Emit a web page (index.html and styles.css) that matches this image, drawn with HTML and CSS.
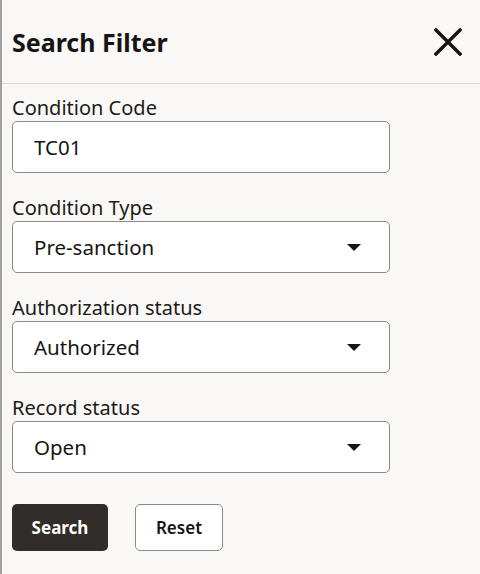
FILE: index.html
```html
<!DOCTYPE html>
<html lang="en">
<head>
    <meta charset="UTF-8">
    <meta name="viewport" content="width=device-width, initial-scale=1.0">
    <title>Search Filter</title>
    <link rel="stylesheet" href="styles.css">
</head>
<body>
    <div class="panel">
        <div class="panel-header">
            <h1>Search Filter</h1>
            <button class="close-btn" aria-label="Close">
                <svg width="28" height="28" viewBox="0 0 28 28">
                    <path d="M2 2 L26 26 M26 2 L2 26" stroke="#161513" stroke-width="3.4" stroke-linecap="square" fill="none"/>
                </svg>
            </button>
        </div>
        <form class="filter-form" onsubmit="return false">
            <div class="field">
                <label for="code">Condition Code</label>
                <input type="text" id="code" class="text-input" value="TC01">
            </div>
            <div class="field">
                <label>Condition Type</label>
                <div class="select-box"><span>Pre-sanction</span><i class="caret"></i></div>
            </div>
            <div class="field">
                <label>Authorization status</label>
                <div class="select-box"><span>Authorized</span><i class="caret"></i></div>
            </div>
            <div class="field">
                <label>Record status</label>
                <div class="select-box"><span>Open</span><i class="caret"></i></div>
            </div>
            <div class="actions">
                <button class="btn btn-primary">Search</button>
                <button class="btn btn-outline" type="reset">Reset</button>
            </div>
        </form>
    </div>
</body>
</html>
```

FILE: styles.css
```css
body {
    margin: 0;
    background: #f9f8f6;
    font-family: "Noto Sans", Arial, sans-serif;
    color: #161513;
}

.panel {
    height: 100vh;
    box-sizing: border-box;
    border-left: 2px solid #a3a19e;
}

.panel-header {
    height: 83px;
    display: flex;
    align-items: center;
    justify-content: space-between;
    padding: 0 18px 0 10px;
    border-bottom: 1px solid #dcdad7;
}

.panel-header h1 {
    margin: 0;
    font-size: 25px;
    font-weight: bold;
}

.close-btn {
    background: none;
    border: none;
    padding: 0;
    width: 28px;
    height: 28px;
    cursor: pointer;
}

.filter-form {
    padding: 11px 0 0 10px;
    width: 378px;
}

.field {
    display: flex;
    flex-direction: column;
    margin-bottom: 22px;
}

.field label {
    font-size: 20px;
    line-height: 26px;
    color: #1d1b19;
}

.text-input,
.select-box {
    box-sizing: border-box;
    height: 52px;
    border: 1px solid #8c8a87;
    border-radius: 5px;
    background: #fff;
    font-family: inherit;
    font-size: 20.5px;
    color: #161513;
    padding: 0 21px;
}

.text-input {
    outline: none;
}

.select-box {
    display: flex;
    align-items: center;
    justify-content: space-between;
    padding-right: 28px;
}

.caret {
    width: 0;
    height: 0;
    border-left: 7px solid transparent;
    border-right: 7px solid transparent;
    border-top: 7px solid #161513;
}

.actions {
    display: flex;
    gap: 27px;
    margin-top: 31px;
}

.btn {
    height: 47px;
    border-radius: 5px;
    font-family: inherit;
    font-size: 17px;
    cursor: pointer;
}

.btn-primary {
    width: 96px;
    background: #312d2a;
    border: none;
    color: #fff;
    font-weight: bold;
}

.btn-outline {
    width: 88px;
    background: #fff;
    border: 1px solid #8c8a87;
    color: #161513;
    font-weight: 600;
}
```
